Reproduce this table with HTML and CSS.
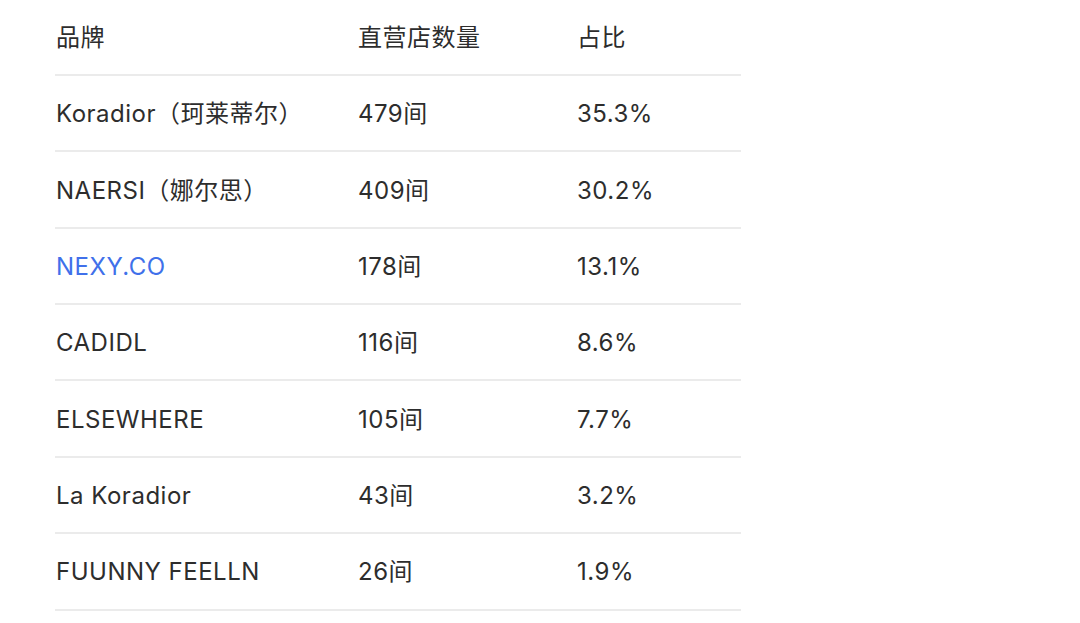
FILE: index.html
```html
<!DOCTYPE html>
<html lang="zh">
<head>
<meta charset="utf-8">
<link rel="stylesheet" href="styles.css">
</head>
<body>
<table class="brands">
  <colgroup><col class="c1"><col class="c2"><col class="c3"></colgroup>
  <thead>
    <tr class="head"><th>品牌</th><th>直营店数量</th><th>占比</th></tr>
  </thead>
  <tbody>
    <tr><td>Koradior（珂莱蒂尔）</td><td>479间</td><td>35.3%</td></tr>
    <tr><td>NAERSI（娜尔思）</td><td>409间</td><td>30.2%</td></tr>
    <tr><td><a class="link" href="#">NEXY.CO</a></td><td>178间</td><td>13.1%</td></tr>
    <tr><td>CADIDL</td><td>116间</td><td>8.6%</td></tr>
    <tr><td>ELSEWHERE</td><td>105间</td><td>7.7%</td></tr>
    <tr><td>La Koradior</td><td>43间</td><td>3.2%</td></tr>
    <tr><td>FUUNNY FEELLN</td><td>26间</td><td>1.9%</td></tr>
  </tbody>
</table>
</body>
</html>
```
FILE: styles.css
```css
html, body {
  margin: 0;
  padding: 0;
  background: #ffffff;
}
body {
  font-family: Inter, "Noto Sans CJK SC", sans-serif;
  font-size: 24px;
  line-height: 30px;
  letter-spacing: 0.5px;
  color: #2d2d2d;
}
.brands {
  margin-left: 55px;
  width: 686px;
  border-collapse: collapse;
  table-layout: fixed;
}
.c1 { width: 302px; }
.c2 { width: 219px; }
.c3 { width: 165px; }
.brands th,
.brands td {
  text-align: left;
  font-weight: 400;
  padding: 2px 0 0 1px;
  border-bottom: 2px solid #ebebeb;
  vertical-align: middle;
  white-space: nowrap;
}
.head th {
  height: 72px;
}
.brands td {
  height: 72.36px;
}
.link {
  color: #4070ea;
  text-decoration: none;
}
```
